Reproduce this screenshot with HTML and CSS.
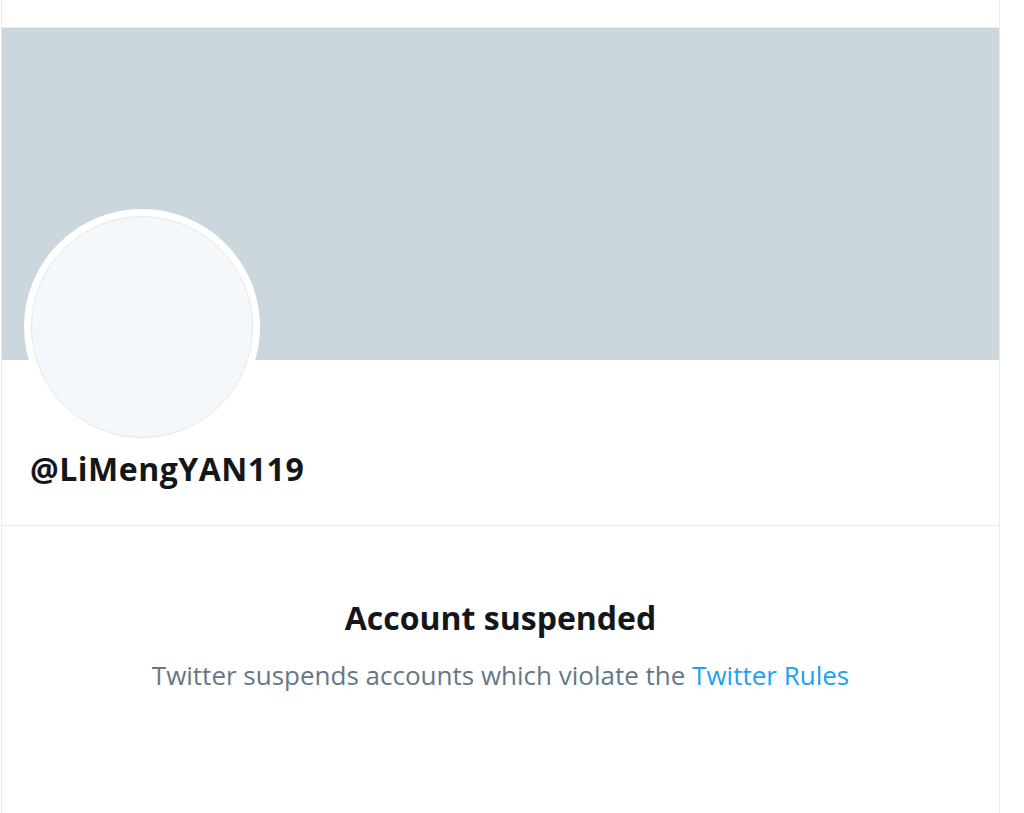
FILE: index.html
```html
<html>
<head>
    <link rel="stylesheet" href="styles.css">
    <title>@LiMengYAN119 / Twitter</title>
</head>
<body>
    <div id="column">
        <div class="topBar"></div>
        <div class="banner"></div>
        <div class="profile">
            <div class="avatar"><div class="avatarInner"></div></div>
            <div class="handle">@LiMengYAN119</div>
        </div>
        <div class="notice">
            <div class="noticeTitle">Account suspended</div>
            <div class="noticeText">Twitter suspends accounts which violate the <a href="#">Twitter Rules</a></div>
        </div>
    </div>
</body>
</html>
```

FILE: styles.css
```css
body
{
    margin: 0;
    background: #ffffff;
    font-family: "Open Sans", "Noto Sans", sans-serif;
}
#column
{
    width: 997px;
    min-height: 813px;
    margin-left: 1px;
    border-left: 1px solid #E6ECF0;
    border-right: 1px solid #E6ECF0;
}
.topBar
{
    height: 27px;
    border-bottom: 1px solid #E6ECF0;
}
.banner
{
    height: 332px;
    background: #CCD6DD;
}
.profile
{
    padding: 0 0 36px 28px;
    border-bottom: 1px solid #E6ECF0;
}
.avatar
{
    width: 222px;
    height: 222px;
    margin: -151px 0 0 -6px;
    border: 7px solid #ffffff;
    border-radius: 50%;
    background: #ffffff;
}
.avatarInner
{
    width: 220px;
    height: 220px;
    border: 1px solid #E1E8ED;
    border-radius: 50%;
    background: #F5F8FA;
}
.handle
{
    margin-top: 4px;
    font-size: 32px;
    font-weight: 700;
    letter-spacing: 0.5px;
    color: #14171A;
    line-height: 40px;
}
.notice
{
    padding-top: 71px;
    text-align: center;
}
.noticeTitle
{
    font-size: 32px;
    font-weight: 700;
    color: #14171A;
    line-height: 42px;
}
.noticeText
{
    margin-top: 19px;
    font-size: 26px;
    color: #657786;
    line-height: 34px;
}
.noticeText a
{
    color: #1DA1F2;
    text-decoration: none;
}
```
